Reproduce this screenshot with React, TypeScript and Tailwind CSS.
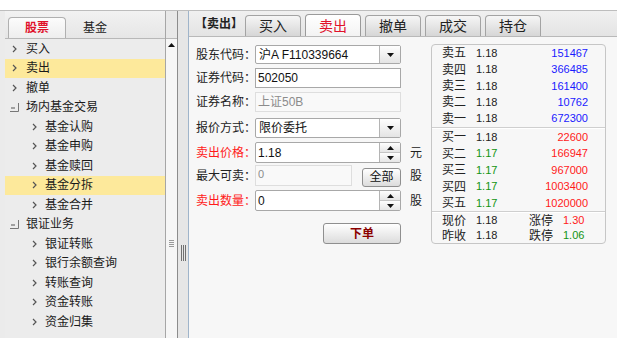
import React from 'react';

function Chevron() {
  return (
    <svg width="5" height="8" viewBox="0 0 5 8">
      <path d="M1 1 L4 4 L1 7" stroke="#555" strokeWidth="1.2" fill="none" />
    </svg>
  );
}

function Collapse() {
  return (
    <svg width="9" height="9" viewBox="0 0 9 9">
      <path d="M1 5H5" stroke="#555" strokeWidth="1" />
      <path d="M8.5 0V8.5H0" stroke="#777" strokeWidth="1" fill="none" />
    </svg>
  );
}

function Down() {
  return (
    <svg width="7" height="4" viewBox="0 0 7 4">
      <path d="M0 0H7L3.5 4Z" fill="#111" />
    </svg>
  );
}
function Up() {
  return (
    <svg width="7" height="4" viewBox="0 0 7 4">
      <path d="M0 4H7L3.5 0Z" fill="#111" />
    </svg>
  );
}

type Item = { t: string; k: 'c0' | 'c1' | 'col'; sel?: boolean };
const items: Item[] = [
  { t: '买入', k: 'c0' },
  { t: '卖出', k: 'c0', sel: true },
  { t: '撤单', k: 'c0' },
  { t: '场内基金交易', k: 'col' },
  { t: '基金认购', k: 'c1' },
  { t: '基金申购', k: 'c1' },
  { t: '基金赎回', k: 'c1' },
  { t: '基金分拆', k: 'c1', sel: true },
  { t: '基金合并', k: 'c1' },
  { t: '银证业务', k: 'col' },
  { t: '银证转账', k: 'c1' },
  { t: '银行余额查询', k: 'c1' },
  { t: '转账查询', k: 'c1' },
  { t: '资金转账', k: 'c1' },
  { t: '资金归集', k: 'c1' },
];

function ListRow({ it }: { it: Item }) {
  return (
    <div className={`flex items-center h-[19.5px] ${it.sel ? 'bg-[#fde99b]' : ''}`}>
      {it.k === 'c0' && (
        <div className="pl-[7px] w-[21px] flex items-center">
          <Chevron />
        </div>
      )}
      {it.k === 'c1' && (
        <div className="pl-[27px] w-[40px] flex items-center">
          <Chevron />
        </div>
      )}
      {it.k === 'col' && (
        <div className="pl-[5px] w-[21px] flex items-center">
          <Collapse />
        </div>
      )}
      <span className="text-[12px] text-[#1a1a1a] leading-none">{it.t}</span>
    </div>
  );
}

const sells = [
  ['卖五', '1.18', '151467'],
  ['卖四', '1.18', '366485'],
  ['卖三', '1.18', '161400'],
  ['卖二', '1.18', '10762'],
  ['卖一', '1.18', '672300'],
];
const buys = [
  ['买一', '1.18', '22600', false],
  ['买二', '1.17', '166947', true],
  ['买三', '1.17', '967000', true],
  ['买四', '1.17', '1003400', true],
  ['买五', '1.17', '1020000', true],
] as const;

function Label({ children, red }: { children: React.ReactNode; red?: boolean }) {
  return (
    <div className={`w-[59px] shrink-0 whitespace-nowrap text-[12px] leading-none ${red ? 'text-[#ff1a1a]' : 'text-[#222]'}`}>
      {children}
    </div>
  );
}

function SpinBtns() {
  return (
    <div className="w-[21px] h-full flex flex-col border-l border-[#b4b4b4]">
      <div className="flex-1 flex items-center justify-center bg-gradient-to-b from-[#fdfdfd] to-[#e6e6e6] border-b border-[#c4c4c4]">
        <Up />
      </div>
      <div className="flex-1 flex items-center justify-center bg-gradient-to-b from-[#fdfdfd] to-[#e6e6e6]">
        <Down />
      </div>
    </div>
  );
}

function SelectBox({ text }: { text: string }) {
  return (
    <div className="w-[146px] h-full flex border border-[#a8a8a8] rounded-[2px] bg-white">
      <div className="flex-1 flex items-center pl-[3px] text-[12px] text-[#111] leading-none">{text}</div>
      <div className="w-[21px] flex items-center justify-center border-l border-[#b4b4b4] bg-gradient-to-b from-[#fefefe] to-[#e4e4e4]">
        <Down />
      </div>
    </div>
  );
}

export default function App() {
  return (
    <div className="w-[617px] h-[338px] overflow-hidden bg-white font-['Liberation_Sans','Noto_Sans_CJK_SC',sans-serif]">
      <div className="h-[10px] bg-white" />
      <div className="flex h-[328px] border-t border-[#bdbdbd]">
        {/* left panel */}
        <div className="w-[165px] shrink-0 flex flex-col bg-[#ebebeb] pl-[5px]">
          <div className="h-[27px] flex items-end bg-gradient-to-b from-[#f2f2f2] to-[#e6e6e6]">
            <div className="ml-[3px] w-[58px] h-[21px] rounded-t-[4px] border border-b-0 border-[#b0b0b0] bg-gradient-to-b from-[#fcfcfc] to-[#eeeeee] flex items-center justify-center text-[12px] font-bold text-[#e0102a] leading-none">
              股票
            </div>
            <div className="w-[58px] h-[21px] flex items-center justify-center text-[12px] text-[#222] leading-none">
              基金
            </div>
          </div>
          <div className="flex-1 border-t border-[#b8b8b8] bg-[#ececec]">
            {items.map((it) => (
              <ListRow key={it.t} it={it} />
            ))}
          </div>
        </div>
        {/* scrollbar */}
        <div className="w-[13px] shrink-0 flex flex-col border-l border-[#a6a6a6] border-r border-r-[#8c8c8c] bg-[#e8e8e8]">
          <div className="h-[27px]" />
          <div className="flex-1 flex flex-col border-t border-[#b8b8b8] bg-[#f6f6f6]">
            <div className="h-[12px] flex items-center justify-center">
              <Up />
            </div>
            <div className="h-[189px]" />
            <div className="flex flex-col items-center gap-[1px]">
              <div className="w-[5px] h-[1px] bg-[#9a9a9a]" />
              <div className="w-[5px] h-[1px] bg-[#9a9a9a]" />
              <div className="w-[5px] h-[1px] bg-[#9a9a9a]" />
              <div className="w-[5px] h-[1px] bg-[#9a9a9a]" />
            </div>
          </div>
        </div>
        {/* splitter */}
        <div className="w-[10px] shrink-0 bg-[#e6e6e6] flex flex-col items-center">
          <div className="h-[234px]" />
          <div className="flex gap-[1px]">
            <div className="w-[1px] h-[16px] bg-[#707070]" />
            <div className="w-[1px] h-[16px] bg-[#707070]" />
            <div className="w-[1px] h-[16px] bg-[#707070]" />
          </div>
        </div>
        {/* right panel */}
        <div className="flex-1 flex flex-col border-l border-[#9fb4ca]">
          <div className="h-[26px] flex items-end bg-gradient-to-b from-[#f0f0f0] to-[#e4e4e4] border-b border-[#b9b9b9]">
            <div className="w-[56px] h-full flex items-center pl-[6px] text-[12px] font-bold text-[#222] leading-none whitespace-nowrap">
              【卖出】
            </div>
            <div className="flex items-end gap-[4px]">
              {['买入', '卖出', '撤单', '成交', '持仓'].map((t) => (
                <div
                  key={t}
                  className={`w-[56px] rounded-t-[4px] border border-b-0 flex items-center justify-center text-[14px] leading-none ${
                    t === '卖出'
                      ? 'h-[22px] border-[#9a9a9a] bg-gradient-to-b from-[#ffffff] to-[#f3f3f3] text-[#e0102a]'
                      : 'h-[21px] border-[#a3a3a3] bg-gradient-to-b from-[#f6f6f6] to-[#d6d6d6] text-[#222]'
                  }`}
                >
                  {t}
                </div>
              ))}
            </div>
          </div>
          <div className="flex-1 flex bg-[#f7f7f7]">
            {/* form */}
            <div className="w-[242px] shrink-0 pl-[7px] flex flex-col">
              <div className="mt-[8px] h-[19px] flex items-center">
                <Label>股东代码：</Label>
                <SelectBox text="沪A F110339664" />
              </div>
              <div className="mt-[4px] h-[20px] flex items-center">
                <Label>证券代码：</Label>
                <div className="w-[146px] h-full flex items-center pl-[2px] border border-[#a8a8a8] bg-white text-[12px] text-[#111] leading-none">
                  502050
                </div>
              </div>
              <div className="mt-[4px] h-[20px] flex items-center">
                <Label>证券名称：</Label>
                <div className="w-[146px] h-full flex items-center pl-[2px] border border-[#dedede] bg-[#f9f9f9] text-[12px] text-[#8c8c8c] leading-none">
                  上证50B
                </div>
              </div>
              <div className="mt-[6px] h-[20px] flex items-center">
                <Label>报价方式：</Label>
                <SelectBox text="限价委托" />
              </div>
              <div className="mt-[4px] h-[21px] flex items-center">
                <Label red>卖出价格：</Label>
                <div className="w-[146px] h-full flex border border-[#a8a8a8] rounded-[2px] bg-white">
                  <div className="flex-1 flex items-center pl-[2px] text-[12px] text-[#111] leading-none">1.18</div>
                  <SpinBtns />
                </div>
                <div className="ml-[9px] text-[12px] text-[#222] leading-none">元</div>
              </div>
              <div className="mt-[2px] h-[21px] flex items-center">
                <Label>最大可卖：</Label>
                <div className="w-[97px] h-full pl-[2px] pt-[3px] border border-[#dedede] bg-[#f9f9f9] text-[11px] text-[#8c8c8c] leading-none">
                  0
                </div>
                <div className="ml-[10px] mt-[3px] w-[39px] h-[19px] flex items-center justify-center rounded-[3px] border border-[#8f8f8f] bg-gradient-to-b from-[#ffffff] to-[#dcdcdc] text-[12px] text-[#111] leading-none">
                  全部
                </div>
                <div className="ml-[9px] text-[12px] text-[#222] leading-none">股</div>
              </div>
              <div className="mt-[4px] h-[21px] flex items-center">
                <Label red>卖出数量：</Label>
                <div className="w-[146px] h-full flex border border-[#a8a8a8] rounded-[2px] bg-white">
                  <div className="flex-1 flex items-center pl-[2px] text-[12px] text-[#111] leading-none">0</div>
                  <SpinBtns />
                </div>
                <div className="ml-[9px] text-[12px] text-[#222] leading-none">股</div>
              </div>
              <div className="mt-[12px] ml-[127px] w-[78px] h-[21px] flex items-center justify-center rounded-[3px] border border-[#8f8f8f] bg-gradient-to-b from-[#ffffff] to-[#dcdcdc] text-[12px] font-bold text-[#8b0000] leading-none">
                下单
              </div>
            </div>
            {/* quote box */}
            <div className="mt-[7px] w-[175px] h-[200px] border border-[#c6c6c6] rounded-[4px] bg-[#f7f7f7] flex flex-col text-[12px] leading-none">
              {sells.map(([a, b, c]) => (
                <div key={a} className="h-[16.5px] flex items-center pl-[10px] pr-[17px]">
                  <span className="w-[34px] text-[#222]">{a}</span>
                  <span className="w-[40px] text-[11px] text-[#222]">{b}</span>
                  <span className="flex-1 text-right text-[11px] text-[#1a1aff]">{c}</span>
                </div>
              ))}
              <div className="border-t border-[#cfcfcf] border-b border-b-white" />
              {buys.map(([a, b, c, g]) => (
                <div key={a} className="h-[16.5px] flex items-center pl-[10px] pr-[17px]">
                  <span className="w-[34px] text-[#222]">{a}</span>
                  <span className={`w-[40px] text-[11px] ${g ? 'text-[#129412]' : 'text-[#222]'}`}>{b}</span>
                  <span className="flex-1 text-right text-[11px] text-[#ff1a1a]">{c}</span>
                </div>
              ))}
              <div className="border-t border-[#cfcfcf] border-b border-b-white" />
              <div className="h-[15px] flex items-center pl-[10px]">
                <span className="w-[34px] text-[#222]">现价</span>
                <span className="w-[53px] text-[11px] text-[#222]">1.18</span>
                <span className="w-[34px] text-[#222]">涨停</span>
                <span className="text-[11px] text-[#ff1a1a]">1.30</span>
              </div>
              <div className="h-[15px] flex items-center pl-[10px]">
                <span className="w-[34px] text-[#222]">昨收</span>
                <span className="w-[53px] text-[11px] text-[#222]">1.18</span>
                <span className="w-[34px] text-[#222]">跌停</span>
                <span className="text-[11px] text-[#129412]">1.06</span>
              </div>
            </div>
          </div>
        </div>
      </div>
    </div>
  );
}
